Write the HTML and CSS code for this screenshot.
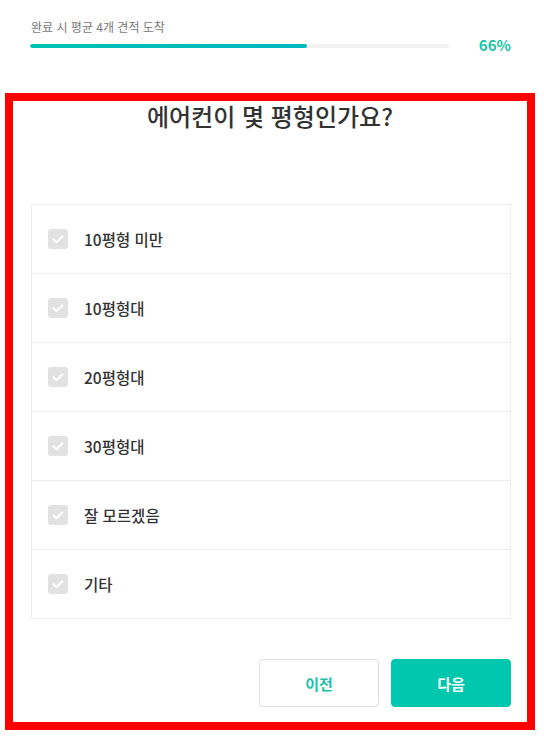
FILE: index.html
```html
<!DOCTYPE html>
<html lang="ko">
<head>
<meta charset="utf-8">
<link rel="stylesheet" href="styles.css">
</head>
<body>
<div class="progress-area">
  <div class="progress-caption">완료 시 평균 4개 견적 도착</div>
  <div class="progress-row">
    <div class="track"><div class="fill" style="width:66%"></div></div>
    <div class="percent">66%</div>
  </div>
</div>
<div class="frame">
  <h1 class="title">에어컨이 몇 평형인가요?</h1>
  <ul class="options">
    <li class="option"><span class="check"><svg viewBox="0 0 20 20" width="20" height="20"><path d="M5.5 10.2l3 3 6-6" fill="none" stroke="#fff" stroke-width="2" stroke-linecap="round" stroke-linejoin="round"/></svg></span><span class="label">10평형 미만</span></li>
    <li class="option"><span class="check"><svg viewBox="0 0 20 20" width="20" height="20"><path d="M5.5 10.2l3 3 6-6" fill="none" stroke="#fff" stroke-width="2" stroke-linecap="round" stroke-linejoin="round"/></svg></span><span class="label">10평형대</span></li>
    <li class="option"><span class="check"><svg viewBox="0 0 20 20" width="20" height="20"><path d="M5.5 10.2l3 3 6-6" fill="none" stroke="#fff" stroke-width="2" stroke-linecap="round" stroke-linejoin="round"/></svg></span><span class="label">20평형대</span></li>
    <li class="option"><span class="check"><svg viewBox="0 0 20 20" width="20" height="20"><path d="M5.5 10.2l3 3 6-6" fill="none" stroke="#fff" stroke-width="2" stroke-linecap="round" stroke-linejoin="round"/></svg></span><span class="label">30평형대</span></li>
    <li class="option"><span class="check"><svg viewBox="0 0 20 20" width="20" height="20"><path d="M5.5 10.2l3 3 6-6" fill="none" stroke="#fff" stroke-width="2" stroke-linecap="round" stroke-linejoin="round"/></svg></span><span class="label">잘 모르겠음</span></li>
    <li class="option"><span class="check"><svg viewBox="0 0 20 20" width="20" height="20"><path d="M5.5 10.2l3 3 6-6" fill="none" stroke="#fff" stroke-width="2" stroke-linecap="round" stroke-linejoin="round"/></svg></span><span class="label">기타</span></li>
  </ul>
  <div class="actions">
    <button class="btn btn-prev">이전</button>
    <button class="btn btn-next">다음</button>
  </div>
</div>
</body>
</html>
```

FILE: styles.css
```css
* { box-sizing: border-box; }
html, body {
  margin: 0;
  padding: 0;
  background: #fff;
}
body {
  font-family: "Noto Sans CJK KR", "Noto Sans", sans-serif;
  color: #333;
  width: 544px;
}
.progress-area {
  padding: 18px 33px 0 30px;
  height: 93px;
}
.progress-caption {
  font-size: 12px;
  line-height: 18px;
  color: #777;
  padding-left: 1px;
}
.progress-row {
  display: flex;
  align-items: center;
  height: 20px;
}
.track {
  width: 419px;
  height: 4px;
  border-radius: 2px;
  background: #f1f1f1;
  overflow: hidden;
}
.fill {
  height: 100%;
  border-radius: 2px;
  background: linear-gradient(90deg, #00c1b1, #00b8c0);
}
.percent {
  margin-left: auto;
  font-size: 15px;
  font-weight: 700;
  color: #1cc3a8;
  line-height: 20px;
  margin-top: -2px;
}
.frame {
  margin-left: 5px;
  width: 530px;
  height: 637px;
  border: 8px solid #ff0000;
  display: flex;
  flex-direction: column;
}
.title {
  margin: 0;
  font-size: 24px;
  font-weight: 500;
  line-height: 30px;
  text-align: center;
  color: #333;
}
.options {
  list-style: none;
  margin: 73px 16px 0 18px;
  padding: 0;
  border: 1px solid #eee;
}
.option {
  display: flex;
  align-items: center;
  height: 69px;
  padding-left: 16px;
  border-top: 1px solid #eee;
}
.option:first-child {
  border-top: none;
  height: 68px;
}
.check {
  width: 20px;
  height: 20px;
  border-radius: 3px;
  background: #e2e2e2;
  display: flex;
}
.label {
  margin-left: 16px;
  font-size: 15.5px;
  font-weight: 500;
  color: #333;
}
.actions {
  display: flex;
  justify-content: flex-end;
  gap: 12px;
  margin: 40px 16px 0 0;
}
.btn {
  width: 120px;
  height: 48px;
  border-radius: 4px;
  font-family: inherit;
  font-size: 15px;
  font-weight: 700;
  cursor: pointer;
}
.btn-prev {
  background: #fff;
  border: 1px solid #e0e0e0;
  color: #1cc3a8;
}
.btn-next {
  background: #00c7ae;
  border: 1px solid #00c7ae;
  color: #fff;
}
```
